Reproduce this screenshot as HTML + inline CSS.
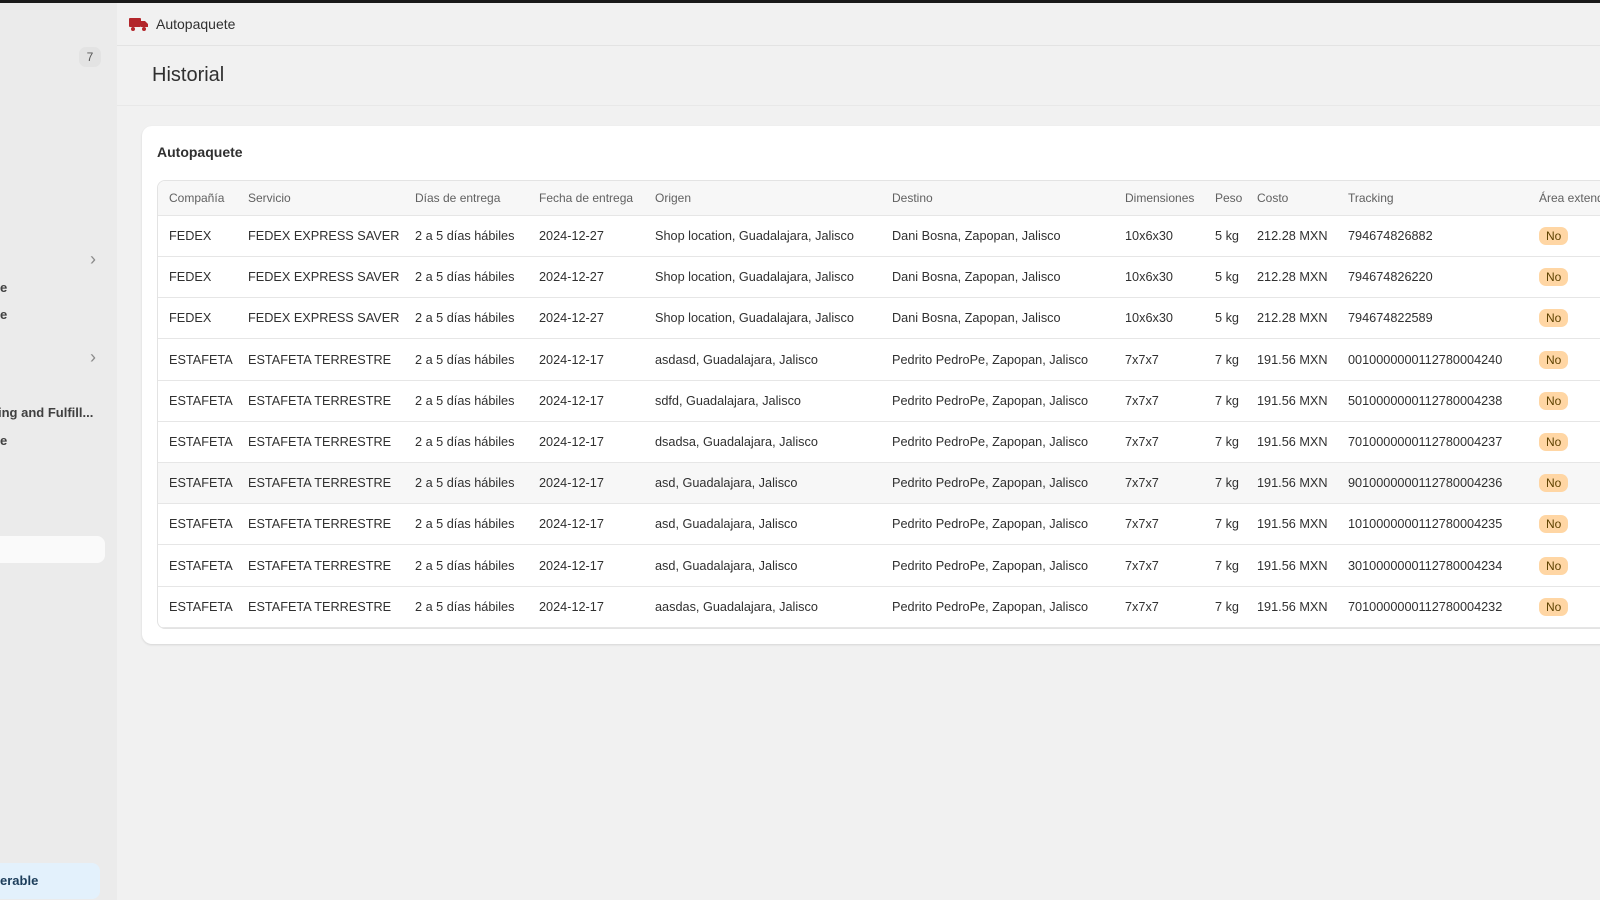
<!DOCTYPE html>
<html><head><meta charset="utf-8"><style>
*{box-sizing:border-box;margin:0;padding:0}
body{width:1600px;height:900px;overflow:hidden;background:#f1f1f1;font-family:"Liberation Sans",sans-serif;color:#303030;position:relative}
.top{position:absolute;left:0;top:0;width:1600px;height:3px;background:#1a1a1a}
.side{position:absolute;left:0;top:3px;width:117px;height:897px;background:#ebebeb}
.side .t{position:absolute;left:0;font-size:13px;font-weight:bold;color:#404040;white-space:nowrap}
.chev{position:absolute;left:90px;font-size:18px;color:#8a8a8a}
.main{position:absolute;left:117px;top:3px;right:0;bottom:0;background:#f1f1f1}
.hdr{position:absolute;left:0;top:0;right:0;height:43px;border-bottom:1px solid #e3e3e3}
.hdr span{position:absolute;left:39px;top:13px;font-size:14px;color:#303030}
h1{position:absolute;left:35px;top:61px;font-size:20px;font-weight:normal;color:#303030}
.ln{position:absolute;left:0;right:0;top:102px;border-top:1px solid #e8e8e8}
.card{position:absolute;left:25px;top:123px;width:1500px;height:518px;background:#fff;border-radius:10px;box-shadow:0 1px 2px rgba(0,0,0,.12)}
.card h2{position:absolute;left:15px;top:18px;font-size:14px;font-weight:bold}
.tbl{position:absolute;left:15px;top:54px;width:1500px;height:449px;border:1px solid #e3e3e3;border-radius:8px;overflow:hidden}
.row{position:absolute;left:0;width:100%;height:41px;border-bottom:1px solid #e6e6e6;font-size:12.7px}
.row span{position:absolute;top:13px;white-space:nowrap}
.head{height:35px;background:#f7f7f7;color:#616161;font-size:12px}
.head span{top:10px}
.no{background:#ffd6a4;color:#5e4200;border-radius:7px;padding:2px 7px;font-size:12px;top:11px!important}
</style></head><body>
<div class="top"></div>
<div class="side">
<div style="position:absolute;left:79px;top:44px;width:22px;height:20px;background:#e3e3e3;border-radius:7px;font-size:12px;text-align:center;line-height:20px;color:#555">7</div>
<div class="chev" style="top:246px">›</div>
<div class="t" style="top:277px">e</div>
<div class="t" style="top:304px">e</div>
<div class="chev" style="top:344px">›</div>
<div class="t" style="top:402px;left:-2px">ing and Fulfill...</div>
<div class="t" style="top:430px">e</div>
<div style="position:absolute;left:0;top:533px;width:105px;height:27px;background:#fafafa;border-radius:0 8px 8px 0"></div>
<div style="position:absolute;left:0;top:860px;width:100px;height:36px;background:#e3f1fc;border-radius:0 8px 8px 0"></div>
<div class="t" style="top:870px;color:#1c3d5a">erable</div>
</div>
<div class="main">
<div class="hdr"><svg style="position:absolute;left:12px;top:14px" width="20" height="15" viewBox="0 0 20 15"><rect x="0" y="1" width="12" height="9" rx="1" fill="#b3262b"/><path d="M12 4h4l3 3v3h-7z" fill="#b3262b"/><circle cx="4" cy="12" r="2" fill="#b3262b"/><circle cx="15" cy="12" r="2" fill="#b3262b"/></svg><span>Autopaquete</span></div>
<h1>Historial</h1>
<div class="ln"></div>
<div class="card"><h2>Autopaquete</h2>
<div class="tbl">
<div class="row head" style="top:0"><span style="left:11px">Compañía</span><span style="left:90px">Servicio</span><span style="left:257px">Días de entrega</span><span style="left:381px">Fecha de entrega</span><span style="left:497px">Origen</span><span style="left:734px">Destino</span><span style="left:967px">Dimensiones</span><span style="left:1057px">Peso</span><span style="left:1099px">Costo</span><span style="left:1190px">Tracking</span><span style="left:1381px">Área extendida</span></div>
</div></div>
</div>
<script>
var d=[["FEDEX","FEDEX EXPRESS SAVER","2024-12-27","Shop location","Dani Bosna","10x6x30","5 kg","212.28 MXN","794674826882"],
["FEDEX","FEDEX EXPRESS SAVER","2024-12-27","Shop location","Dani Bosna","10x6x30","5 kg","212.28 MXN","794674826220"],
["FEDEX","FEDEX EXPRESS SAVER","2024-12-27","Shop location","Dani Bosna","10x6x30","5 kg","212.28 MXN","794674822589"],
["ESTAFETA","ESTAFETA TERRESTRE","2024-12-17","asdasd","Pedrito PedroPe","7x7x7","7 kg","191.56 MXN","0010000000112780004240"],
["ESTAFETA","ESTAFETA TERRESTRE","2024-12-17","sdfd","Pedrito PedroPe","7x7x7","7 kg","191.56 MXN","5010000000112780004238"],
["ESTAFETA","ESTAFETA TERRESTRE","2024-12-17","dsadsa","Pedrito PedroPe","7x7x7","7 kg","191.56 MXN","7010000000112780004237"],
["ESTAFETA","ESTAFETA TERRESTRE","2024-12-17","asd","Pedrito PedroPe","7x7x7","7 kg","191.56 MXN","9010000000112780004236"],
["ESTAFETA","ESTAFETA TERRESTRE","2024-12-17","asd","Pedrito PedroPe","7x7x7","7 kg","191.56 MXN","1010000000112780004235"],
["ESTAFETA","ESTAFETA TERRESTRE","2024-12-17","asd","Pedrito PedroPe","7x7x7","7 kg","191.56 MXN","3010000000112780004234"],
["ESTAFETA","ESTAFETA TERRESTRE","2024-12-17","aasdas","Pedrito PedroPe","7x7x7","7 kg","191.56 MXN","7010000000112780004232"]];
var t=document.querySelector('.tbl'),h='';
d.forEach(function(r,i){h+='<div class="row" style="top:'+(35+i*41.2)+'px;'+(i==6?'background:#f7f7f7':'')+'"><span style="left:11px">'+r[0]+'</span><span style="left:90px">'+r[1]+'</span><span style="left:257px">2 a 5 días hábiles</span><span style="left:381px">'+r[2]+'</span><span style="left:497px">'+r[3]+', Guadalajara, Jalisco</span><span style="left:734px">'+r[4]+', Zapopan, Jalisco</span><span style="left:967px">'+r[5]+'</span><span style="left:1057px">'+r[6]+'</span><span style="left:1099px">'+r[7]+'</span><span style="left:1190px">'+r[8]+'</span><span class="no" style="left:1381px">No</span></div>'});
t.insertAdjacentHTML('beforeend',h);
</script>
</body></html>
